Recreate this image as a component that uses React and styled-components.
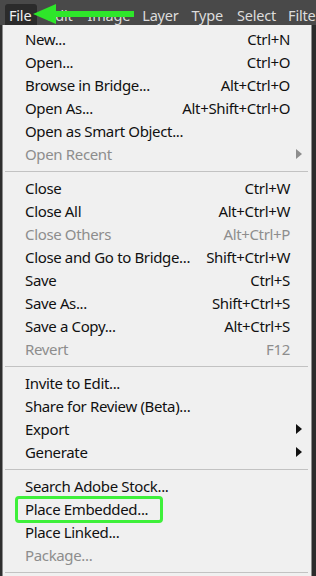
import React from "react";
import styled, { createGlobalStyle } from "styled-components";

const Global = createGlobalStyle`
  html, body { margin: 0; padding: 0; }
  body {
    width: 316px;
    height: 576px;
    overflow: hidden;
    background: #2e2e2e;
    font-family: "Noto Sans", "Open Sans", sans-serif;
  }
`;

const Screen = styled.div`
  position: relative;
  width: 316px;
  height: 576px;
  overflow: hidden;
  display: flex;
  flex-direction: column;
`;

const MenuBar = styled.div`
  height: 25px;
  background: #494949;
  display: flex;
  align-items: flex-end;
  padding-left: 5px;
  flex-shrink: 0;
  overflow: hidden;
`;

const BarItem = styled.div`
  height: 21px;
  padding: 0 ${(p) => p.$pr ?? 6}px 0 ${(p) => p.$pl ?? 6}px;
  display: flex;
  align-items: center;
  font-size: 14.5px;
  letter-spacing: -0.2px;
  white-space: nowrap;
  flex-shrink: 0;
  border-radius: 3px 3px 0 0;
  background: ${(p) => (p.$active ? "#2b2b2b" : "transparent")};
  color: ${(p) => (p.$active ? "#f0f0f0" : "#dcdcdc")};
`;

const Body = styled.div`
  display: flex;
  flex: 1;
`;

const Gutter = styled.div`
  width: 2px;
  background: #2e2e2e;
  flex-shrink: 0;
`;

const Dropdown = styled.div`
  width: 310px;
  background: #f0f0f0;
  border-left: 1px solid #8c8c8c;
  border-right: 1px solid #8c8c8c;
  padding-top: 2px;
  box-sizing: border-box;
  flex-shrink: 0;
`;

const Row = styled.div`
  height: 23px;
  display: grid;
  grid-template-columns: 1fr auto 21px;
  align-items: center;
  padding-left: 22px;
  font-size: 15px;
  letter-spacing: -0.35px;
  color: ${(p) => (p.$disabled ? "#8d8d8d" : "#111")};
  white-space: nowrap;
`;

const Label = styled.span`
  position: relative;
  justify-self: start;
  &::after {
    content: "";
    display: ${(p) => (p.$highlight ? "block" : "none")};
    position: absolute;
    left: -10px;
    right: -15px;
    top: -3px;
    bottom: -4px;
    border: 3px solid #3ef03a;
    border-radius: 4px;
  }
`;

const Shortcut = styled.span`
  text-align: right;
  padding-left: 16px;
`;

const Arrow = styled.span`
  justify-self: end;
  margin-right: 9px;
  width: 0;
  height: 0;
  border-top: 5px solid transparent;
  border-bottom: 5px solid transparent;
  border-left: 6px solid ${(p) => (p.$disabled ? "#8d8d8d" : "#111")};
`;

const Separator = styled.div`
  height: 1px;
  margin: 6px 3px 4px 2px;
  background: #c2c2c2;
`;

const RightEdge = styled.div`
  flex: 1;
  background: #2b2b2b;
`;

const Annotation = styled.svg`
  position: absolute;
  left: 28px;
  top: 0;
  pointer-events: none;
`;

const groups = [
  [
    ["New...", "Ctrl+N"],
    ["Open...", "Ctrl+O"],
    ["Browse in Bridge...", "Alt+Ctrl+O"],
    ["Open As...", "Alt+Shift+Ctrl+O"],
    ["Open as Smart Object...", ""],
    ["Open Recent", "", { disabled: true, sub: true }],
  ],
  [
    ["Close", "Ctrl+W"],
    ["Close All", "Alt+Ctrl+W"],
    ["Close Others", "Alt+Ctrl+P", { disabled: true }],
    ["Close and Go to Bridge...", "Shift+Ctrl+W"],
    ["Save", "Ctrl+S"],
    ["Save As...", "Shift+Ctrl+S"],
    ["Save a Copy...", "Alt+Ctrl+S"],
    ["Revert", "F12", { disabled: true }],
  ],
  [
    ["Invite to Edit...", ""],
    ["Share for Review (Beta)...", ""],
    ["Export", "", { sub: true }],
    ["Generate", "", { sub: true }],
  ],
  [
    ["Search Adobe Stock...", ""],
    ["Place Embedded...", "", { highlight: true }],
    ["Place Linked...", ""],
    ["Package...", "", { disabled: true }],
  ],
];

export default function App() {
  return (
    <>
      <Global />
      <Screen>
        <MenuBar>
          <BarItem $active $pl={4} $pr={6}>File</BarItem>
          <BarItem $pl={10}>Edit</BarItem>
          <BarItem $pl={9}>Image</BarItem>
          <BarItem>Layer</BarItem>
          <BarItem $pl={7}>Type</BarItem>
          <BarItem $pl={8}>Select</BarItem>
          <BarItem>Filter</BarItem>
        </MenuBar>
        <Body>
          <Gutter />
          <Dropdown>
            {groups.map((g, gi) => (
              <React.Fragment key={gi}>
                {g.map(([label, sc, o = {}]) => (
                  <Row key={label} $disabled={o.disabled}>
                    <Label $highlight={o.highlight}>{label}</Label>
                    <Shortcut>{sc}</Shortcut>
                    {o.sub ? <Arrow $disabled={o.disabled} /> : <span />}
                  </Row>
                ))}
                <Separator />
              </React.Fragment>
            ))}
          </Dropdown>
          <RightEdge />
        </Body>
        <Annotation width="110" height="28" viewBox="0 0 110 28">
          <polygon points="5,14 28,4 28,24" fill="#2ee62a" />
          <rect x="26" y="11" width="80" height="6" fill="#2ee62a" />
        </Annotation>
      </Screen>
    </>
  );
}
